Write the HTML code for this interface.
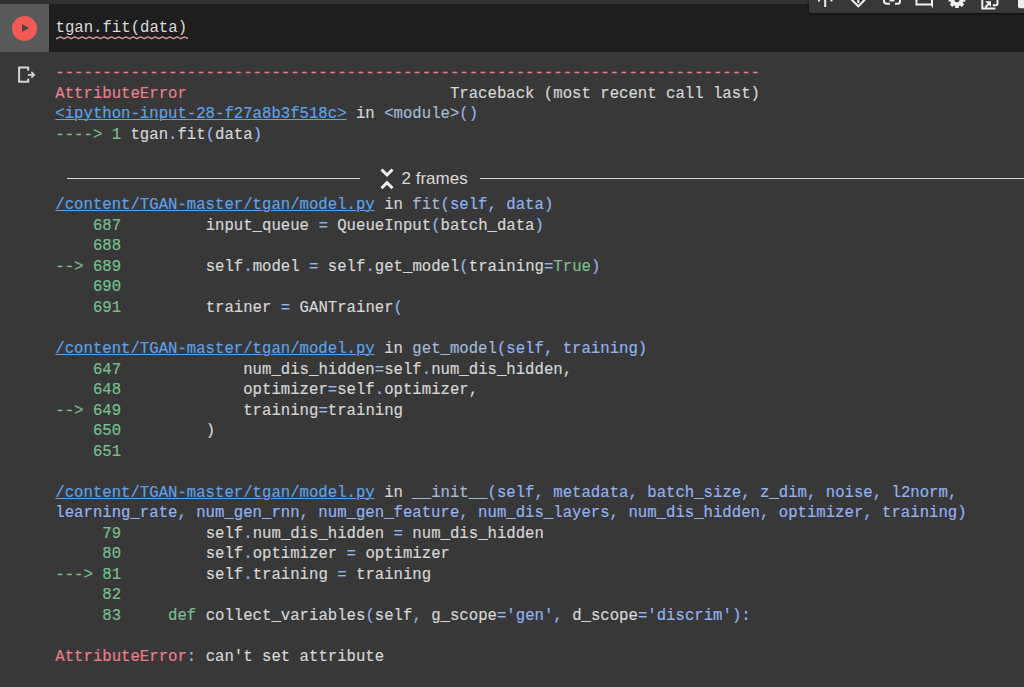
<!DOCTYPE html>
<html><head><meta charset="utf-8">
<style>
html,body{margin:0;padding:0;width:1024px;height:687px;overflow:hidden;background:#383838;}
body{position:relative;font-family:"Liberation Sans",sans-serif;}
.topband{position:absolute;left:0;top:0;width:1024px;height:4px;background:#303030;}
.gutter{position:absolute;left:0;top:4px;width:49px;height:48px;background:#595959;}
.editor{position:absolute;left:49px;top:4px;width:975px;height:48px;background:#1e1e1e;}
.run{position:absolute;left:12px;top:16px;width:25px;height:25px;border-radius:50%;background:#f25a55;}
.run:after{content:"";position:absolute;left:9.7px;top:8px;border-left:7px solid #474747;border-top:4.5px solid transparent;border-bottom:4.5px solid transparent;}
.code{position:absolute;font-family:"Liberation Mono",monospace;font-size:15.66px;white-space:pre;color:#d6d6d6;-webkit-text-stroke:0.18px currentColor;}
.src{left:55.5px;top:18px;line-height:20px;color:#dcdcdc;-webkit-text-stroke:0;}
.squig{position:absolute;left:56px;top:34.5px;width:132px;height:6px;overflow:hidden;}
.out{left:55.3px;line-height:20.5px;}
.r{color:#ea7f8b}
.l{color:#5ea2e8;text-decoration:underline;text-decoration-thickness:1px;text-underline-offset:0.6px;}
.f{color:#a2b9d8}
.p{color:#92b2f0}
.g{color:#76c08e}
.tb{position:absolute;left:809px;top:-10px;width:230px;height:23.3px;background:#383838;box-shadow:0 1px 3px rgba(0,0,0,.6);border-radius:2px;}
.frames{position:absolute;left:0;top:164px;width:1024px;height:28px;}
.hl{position:absolute;top:178px;height:1px;background:#d8d8d8;}
.ft{position:absolute;left:401.5px;top:168.5px;font-size:17px;color:#dadada;line-height:20px;}
</style></head><body>
<div class="topband"></div>
<div class="gutter"></div>
<div class="editor"></div>
<div class="run"></div>
<div class="code src">tgan.fit(data)</div>
<svg class="squig" viewBox="0 0 132 6"><path d="M-3.00 1.9 L0.65 3.7 L4.30 1.9 L7.95 3.7 L11.60 1.9 L15.25 3.7 L18.90 1.9 L22.55 3.7 L26.20 1.9 L29.85 3.7 L33.50 1.9 L37.15 3.7 L40.80 1.9 L44.45 3.7 L48.10 1.9 L51.75 3.7 L55.40 1.9 L59.05 3.7 L62.70 1.9 L66.35 3.7 L70.00 1.9 L73.65 3.7 L77.30 1.9 L80.95 3.7 L84.60 1.9 L88.25 3.7 L91.90 1.9 L95.55 3.7 L99.20 1.9 L102.85 3.7 L106.50 1.9 L110.15 3.7 L113.80 1.9 L117.45 3.7 L121.10 1.9 L124.75 3.7 L128.40 1.9 L132.05 3.7 L135.70 1.9 L139.35 3.7" fill="none" stroke="#cf9c9b" stroke-width="1.5" stroke-linejoin="round"/></svg>
<div class="tb"></div>
<svg style="position:absolute;left:0;top:0" width="1024" height="16" viewBox="0 0 1024 16">
<g fill="none" stroke="#f0f0f0" stroke-width="2">
<path d="M825.2 0 V7"/>
<path d="M851.5 -0.5 L858.3 6.3 L865 -0.5 M858.3 0 V3"/>
<path d="M884 -1 V1 Q884 3.8 887 3.8 H890 M895 3.8 H898 Q900 3.8 900 1 V-1"/>
<path d="M916.5 -1 V4.5 H931"/><path d="M932 -1 V6"/>
<path d="M982.3 -1 V8.5 H995.5 M997.5 -1 V3.5 Q997.5 5.2 995.8 5.2 H992.8 M985.3 7.3 L989 3.6"/>
</g>
<g fill="#f0f0f0">
<rect x="818" y="0" width="2" height="1.5"/><rect x="830.5" y="0" width="2" height="1.5"/>
<rect x="889.5" y="0" width="5" height="1.5"/>
<path d="M930 3.5 L933 3.5 L933 8.5 Z"/>
<path d="M959.53 5.80 L958.93 6.01 L958.79 8.11 L955.21 8.11 L955.07 6.01 L954.47 5.80 L953.90 5.53 L952.32 6.91 L949.79 4.38 L951.17 2.80 L950.90 2.23 L950.69 1.63 L948.59 1.49 L948.59 -2.09 L950.69 -2.23 L950.90 -2.83 L951.17 -3.40 L949.79 -4.98 L952.32 -7.51 L953.90 -6.13 L954.47 -6.40 L955.07 -6.61 L955.21 -8.71 L958.79 -8.71 L958.93 -6.61 L959.53 -6.40 L960.10 -6.13 L961.68 -7.51 L964.21 -4.98 L962.83 -3.40 L963.10 -2.83 L963.31 -2.23 L965.41 -2.09 L965.41 1.49 L963.31 1.63 L963.10 2.23 L962.83 2.80 L964.21 4.38 L961.68 6.91 L960.10 5.53 Z"/>
<path d="M985.2 1.2 H991 V7 Z"/>
<path d="M1018 0 H1024 V8.3 H1020 Q1018 8.3 1018 6.3 Z"/>
</g>
<circle cx="957" cy="-0.3" r="2.6" fill="#383838"/>
</svg>

<!-- output icon -->
<svg style="position:absolute;left:16px;top:64px" width="22" height="22" viewBox="0 0 22 22">
<path d="M12.2 6.7 V3.5 H3.1 V17.7 H12.2 V14.8" fill="none" stroke="#d4d4d4" stroke-width="2"/>
<path d="M11.8 10.8 H18.2 M15.3 7.9 L18.2 10.8 L15.3 13.7" fill="none" stroke="#d4d4d4" stroke-width="1.7"/>
</svg>

<div class="code out" style="top:63.2px"><span class="r">---------------------------------------------------------------------------</span>
<span class="r">AttributeError</span>                            Traceback (most recent call last)
<span class="l">&lt;ipython-input-28-f27a8b3f518c&gt;</span> in <span class="f">&lt;module&gt;</span><span class="p">()</span>
<span class="g">----&gt; 1</span> tgan<span class="p">.</span>fit<span class="p">(</span>data<span class="p">)</span>
</div>

<div class="hl" style="left:67px;width:293px"></div>
<div class="hl" style="left:480px;width:544px"></div>
<div class="ft">2 frames</div>
<svg style="position:absolute;left:378px;top:167px" width="18" height="22" viewBox="0 0 18 22">
<path d="M3.5 2.5 L9 8 L14.5 2.5 M3.5 21.2 L9 15.7 L14.5 21.2" fill="none" stroke="#f0f0f0" stroke-width="3"/>
</svg>

<div class="code out" style="top:195.4px;line-height:20.51px"><span class="l">/content/TGAN-master/tgan/model.py</span> in <span class="f">fit</span><span class="p">(self, data)</span>
<span class="g">    687</span>         input_queue <span class="p">=</span> QueueInput<span class="p">(</span>batch_data<span class="p">)</span>
<span class="g">    688</span>
<span class="g">--&gt; 689</span>         self<span class="p">.</span>model <span class="p">=</span> self<span class="p">.</span>get_model<span class="p">(</span>training<span class="p">=</span><span class="g">True</span><span class="p">)</span>
<span class="g">    690</span>
<span class="g">    691</span>         trainer <span class="p">=</span> GANTrainer<span class="p">(</span>

<span class="l">/content/TGAN-master/tgan/model.py</span> in <span class="f">get_model</span><span class="p">(self, training)</span>
<span class="g">    647</span>             num_dis_hidden<span class="p">=</span>self<span class="p">.</span>num_dis_hidden,
<span class="g">    648</span>             optimizer<span class="p">=</span>self<span class="p">.</span>optimizer,
<span class="g">--&gt; 649</span>             training<span class="p">=</span>training
<span class="g">    650</span>         )
<span class="g">    651</span>

<span class="l">/content/TGAN-master/tgan/model.py</span> in <span class="f">__init__</span><span class="p">(self, metadata, batch_size, z_dim, noise, l2norm,</span>
<span class="p">learning_rate, num_gen_rnn, num_gen_feature, num_dis_layers, num_dis_hidden, optimizer, training)</span>
<span class="g">     79</span>         self<span class="p">.</span>num_dis_hidden <span class="p">=</span> num_dis_hidden
<span class="g">     80</span>         self<span class="p">.</span>optimizer <span class="p">=</span> optimizer
<span class="g">---&gt; 81</span>         self<span class="p">.</span>training <span class="p">=</span> training
<span class="g">     82</span>
<span class="g">     83</span>     <span class="g">def</span> collect_variables<span class="p">(</span>self<span class="p">,</span> g_scope<span class="p">=</span><span class="p">'gen'</span><span class="p">,</span> d_scope<span class="p">=</span><span class="p">'discrim'</span><span class="p">):</span>

<span class="r">AttributeError</span><span class="p">:</span> can't set attribute
</div>
</body></html>
